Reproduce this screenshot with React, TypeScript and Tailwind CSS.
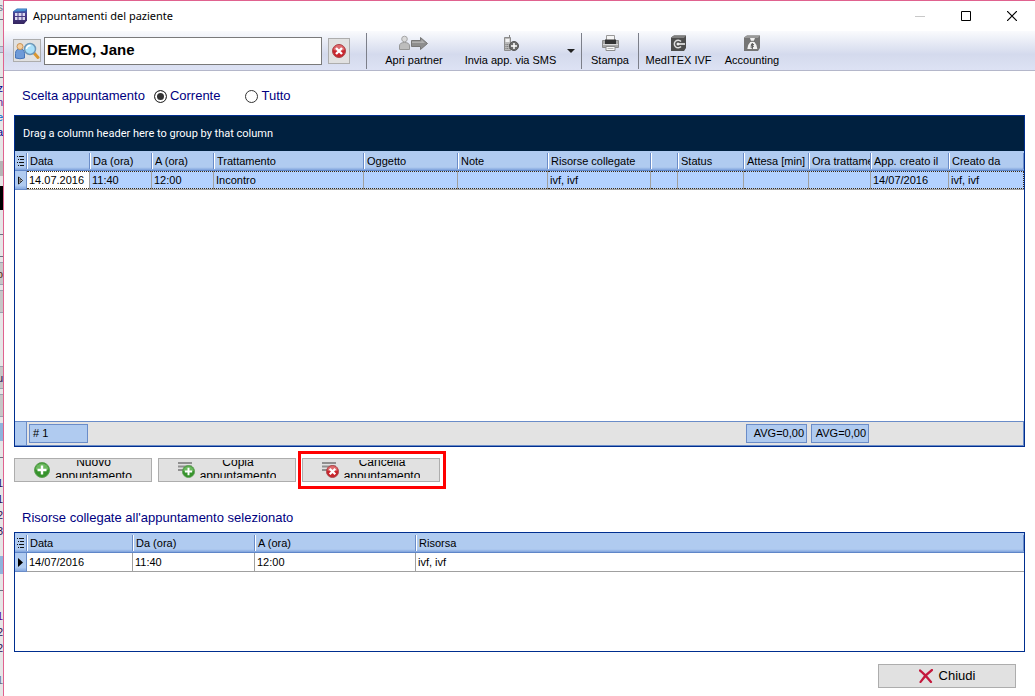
import type { ReactNode } from 'react';
import { clsx } from 'clsx';

type Column = {
  title: string;
  width: string;
  value: string;
  summary?: string;
};

const appointmentColumns: Column[] = [
  { title: 'Data', width: 'w-[63px]', value: '14.07.2016', summary: '# 1' },
  { title: 'Da (ora)', width: 'w-[62px]', value: '11:40' },
  { title: 'A (ora)', width: 'w-[62px]', value: '12:00' },
  { title: 'Trattamento', width: 'w-[150px]', value: 'Incontro' },
  { title: 'Oggetto', width: 'w-[94px]', value: '' },
  { title: 'Note', width: 'w-[90px]', value: '' },
  { title: 'Risorse collegate', width: 'w-[103px]', value: 'ivf, ivf' },
  { title: '', width: 'w-[27px]', value: '' },
  { title: 'Status', width: 'w-[66px]', value: '' },
  { title: 'Attesa [min]', width: 'w-[65px]', value: '', summary: 'AVG=0,00' },
  { title: 'Ora trattamento', width: 'w-[62px]', value: '', summary: 'AVG=0,00' },
  { title: 'App. creato il', width: 'w-[78px]', value: '14/07/2016' },
  { title: 'Creato da', width: '', value: 'ivf, ivf' },
];

const resourceColumns: Column[] = [
  { title: 'Data', width: 'w-[106px]', value: '14/07/2016' },
  { title: 'Da (ora)', width: 'w-[122px]', value: '11:40' },
  { title: 'A (ora)', width: 'w-[161px]', value: '12:00' },
  { title: 'Risorsa', width: '', value: 'ivf, ivf' },
];

// sliver of the window that lies behind the dialog
const backdrop: { size: string; text?: string }[] = [
  { size: 'h-[19px] text-gray-500', text: 's' },
  { size: 'h-[27px] border-t border-gray-500' },
  { size: 'h-[6px] bg-[#c9cde0] border-t border-gray-400' },
  { size: 'h-[25px] border-t border-gray-400' },
  { size: 'h-[4px] border-t border-gray-500' },
  { size: 'h-[14px] text-[#00008b]', text: 'z' },
  { size: 'h-[15px] text-[#5b0a91]', text: 'n' },
  { size: 'h-[15px] text-[#0066cc]', text: 'e' },
  { size: 'h-[36px] text-[#00008b]', text: 'a' },
  { size: 'h-[15px] bg-[#b5b5b5]' },
  { size: 'h-[10px]' },
  { size: 'h-[24px] bg-black' },
  { size: 'h-[24px]' },
  { size: 'h-[22px] border-t border-gray-500' },
  { size: 'h-[6px] border-t border-gray-500' },
  { size: 'h-[23px] bg-[#c6c6c6] border-y border-gray-400 leading-[22px] text-[#5b2a10]', text: 'o' },
  { size: 'h-[5px]' },
  { size: 'h-[23px] bg-[#c6c6c6] border-y border-gray-400' },
  { size: 'h-[53px]' },
  { size: 'h-[23px] bg-[#c6c6c6] border-y border-gray-400 leading-[22px] text-[#2b1055]', text: 'u' },
  { size: 'h-[5px]' },
  { size: 'h-[23px] bg-[#c6c6c6] border-y border-gray-400' },
  { size: 'h-[6px]' },
  { size: 'h-[18px] bg-[#8fb4dc]' },
  { size: 'h-[16px]' },
  { size: 'h-[19px] border-t border-gray-500' },
  { size: 'h-[16px] text-[#2b1055]', text: '1' },
  { size: 'h-[16px] text-[#2b1055]', text: '1' },
  { size: 'h-[16px] text-[#2b1055]', text: '2' },
  { size: 'h-[32px] text-[#2b1055]', text: '3' },
  { size: 'h-[18px] bg-[#8fb4dc]' },
  { size: 'h-[16px]' },
  { size: 'h-[19px] border-t border-gray-500' },
  { size: 'h-[16px] text-[#5b0a91]', text: '1' },
  { size: 'h-[16px] text-[#2b1055]', text: '2' },
  { size: 'h-[32px] text-[#2b1055]', text: '2' },
  { size: 'h-[16px] text-gray-500', text: '1' },
];

function AppIcon() {
  return (
    <svg width="14" height="16" viewBox="0 0 14 16">
      <defs>
        <linearGradient id="app" x1="0" y1="0" x2="0" y2="1">
          <stop offset="0" stopColor="#2f6fb8" />
          <stop offset="0.35" stopColor="#4b3f90" />
          <stop offset="1" stopColor="#35265f" />
        </linearGradient>
      </defs>
      <path d="M0 3.500 4 .5h10v12L11 16H0z" fill="url(#app)" />
      <path d="M.5 3.500 4 1h9.500L12 3z" fill="#4a90d0" />
      <path d="M2 5h2.500v3H2zM5.500 5h3v3h-3zM9.500 5H12v3H9.500zM2 9h2.500v3H2zM5.500 9h3v3h-3zM9.500 9H12v3H9.500z" fill="#dcd8ee" />
    </svg>
  );
}

function PatientSearchIcon() {
  return (
    <svg width="25" height="18" viewBox="0 0 25 18">
      <path d="M.5 16v-4.500q0-4.500 4.500-4.500t4.500 4.500V16q-4.500 1.500-9 0z" fill="#6f9bd8" stroke="#4674b8" />
      <circle cx="5" cy="4.500" r="3" fill="#f5cfa0" stroke="#c99355" />
      <path d="m19 11 4 4.500" stroke="#d9962f" strokeWidth="3" strokeLinecap="round" />
      <circle cx="15" cy="7" r="5.500" fill="#a9e0fa" stroke="#6f98b8" strokeWidth="1.500" />
      <path d="M11.500 7q.5-3.500 4-3.500" stroke="#fff" strokeWidth="1.500" fill="none" />
    </svg>
  );
}

function DeleteBadge({ size = 14 }: { size?: number }) {
  return (
    <svg width={size} height={size} viewBox="0 0 14 14">
      <circle cx="7" cy="7" r="6.500" fill="#c9252c" stroke="#a9474b" />
      <path d="M1.500 6a5.500 5 0 0 1 11 0q-5.500 2-11 0" fill="#dd6a6d" />
      <path d="m4 4 6 6m0-6-6 6" stroke="#fff" strokeWidth="2.400" />
    </svg>
  );
}

function AddBadge({ size = 16 }: { size?: number }) {
  return (
    <svg width={size} height={size} viewBox="0 0 16 16">
      <circle cx="8" cy="8" r="7.500" fill="#36932c" stroke="#5f9f55" />
      <path d="M1.500 7.500a6.500 6 0 0 1 13 0q-6.500 2-13 0" fill="#6cb85f" />
      <path d="M8 3.500v9M3.500 8h9" stroke="#fff" strokeWidth="2.400" />
    </svg>
  );
}

function ListIcon({ children }: { children: ReactNode }) {
  return (
    <span className="relative block h-4 w-[17px]">
      <svg width="15" height="9" viewBox="0 0 15 9">
        <path d="M0 1h14M0 4.500h14M0 8h6" stroke="#8f8f8f" strokeWidth="2" />
      </svg>
      <span className="absolute right-0 bottom-0 [&>svg]:block">{children}</span>
    </span>
  );
}

function PartnerIcon() {
  return (
    <svg width="32" height="16" viewBox="0 0 32 16">
      <path d="M1.500 14.500V11q0-3.500 5-3.500t5 3.500v3.500z" fill="#bdbdbd" stroke="#979797" />
      <circle cx="6.500" cy="4" r="2.800" fill="#dadada" stroke="#a5a5a5" />
      <path d="M13.500 5.500h9V2.500l7 6-7 6v-3h-9z" fill="#8e8e8e" stroke="#777" />
      <path d="M14 6.500h9.500v-2l3.500 3.500H14z" fill="#b0b0b0" />
    </svg>
  );
}

function SmsIcon() {
  return (
    <svg width="16" height="16" viewBox="0 0 16 16">
      <path d="M1.500 2.500h6v13h-6z" fill="#b9b9b9" stroke="#8c8c8c" />
      <path d="M6.500 0v3" stroke="#868686" />
      <path d="M2.500 4h4v3h-4z" fill="#f1f1f1" />
      <path d="M2.500 9.500h4.500M2.500 11.500h4.500M2.500 13.500h4.500" stroke="#777" strokeDasharray="1 .7" />
      <circle cx="11" cy="11" r="4.500" fill="#6c6c6c" stroke="#555" />
      <path d="M11 8v6M8 11h6" stroke="#fff" strokeWidth="1.500" />
    </svg>
  );
}

function PrinterIcon() {
  return (
    <svg width="17" height="16" viewBox="0 0 17 16">
      <path d="M4.500.5h8v5h-8z" fill="#f5f5f5" stroke="#999" />
      <path d="M.5 5.500h16v7H.5z" fill="#a8a8a8" stroke="#8a8a8a" />
      <path d="M3 4.500h11V9H3z" fill="#333" />
      <path d="M1 9.500h15" stroke="#d9d9d9" />
      <path d="M4 11.500h9v4H4z" fill="#fafafa" stroke="#8c8c8c" />
      <path d="M5.500 13.500h6" stroke="#b5b5b5" />
    </svg>
  );
}

function MeditexIcon() {
  return (
    <svg width="16" height="16" viewBox="0 0 16 16">
      <path d="m0 2.500 3-2h12v12.500L13 16H0z" fill="#4d4d4d" />
      <path d="m0 2.500 3-2h12L13 3H0z" fill="#808080" />
      <path d="M10 6.500a3.800 3.800 0 1 0 0 5" fill="none" stroke="#ddd" strokeWidth="1.500" />
      <path d="M6.500 9H14" stroke="#eee" strokeWidth="1.600" />
      <circle cx="7" cy="9" r="1.500" fill="#eee" />
    </svg>
  );
}

function AccountingIcon() {
  return (
    <svg width="16" height="16" viewBox="0 0 16 16">
      <path d="m0 2.500 3-2h13v12.500L14 16H0z" fill="#757575" />
      <path d="m0 2.500 3-2h13L14 3H0z" fill="#9a9a9a" />
      <path d="M6 3h5L9.800 6q3.500 4 3.500 8h-10q0-4 3.700-8z" fill="#f3f3f3" />
      <path d="M6 6.300h5" stroke="#666" />
      <path d="M10 9.500q-3-1-3 .5t2.500 1q0 2-3 1M8.300 8v6" fill="none" stroke="#555" />
    </svg>
  );
}

function CloseCross() {
  return (
    <svg width="14" height="14" viewBox="0 0 14 14">
      <path d="M1 1.500q4 3 11 11.500M13 1Q6 6 1.500 13" fill="none" stroke="#c4183c" strokeWidth="2.200" strokeLinecap="round" />
    </svg>
  );
}

function MenuGlyph() {
  return (
    <svg className="mx-auto block" width="7" height="10" viewBox="0 0 7 10">
      <path d="M0 .5h1M2 .5h5M1 3.500h1M3 3.500h4M0 6.500h1M2 6.500h5M1 9.500h1M3 9.500h4" stroke="#111" />
    </svg>
  );
}

function ToolButton({ icon, label, width }: { icon: ReactNode; label: string; width: string }) {
  return (
    <button type="button" className={clsx('flex flex-col items-center gap-px whitespace-nowrap pt-px text-[11px] leading-4', width)}>
      {icon}
      {label}
    </button>
  );
}

function Separator() {
  return <div className="h-9 w-px shrink-0 bg-[#7c7f8a]" />;
}

function ActionButton({ icon, children }: { icon: ReactNode; children: ReactNode }) {
  return (
    <button
      type="button"
      className="flex h-6 w-[138px] items-center justify-center gap-[5px] border border-[#adadad] bg-[#e1e1e1] text-xs"
    >
      {icon}
      <span className="mb-[2px] flex h-[18px] items-center overflow-hidden leading-[14px]">
        <span>{children}</span>
      </span>
    </button>
  );
}

function RadioOption({ label, checked }: { label: string; checked?: boolean }) {
  return (
    <label className="flex items-center gap-[3px]">
      <input
        type="radio"
        name="scelta"
        defaultChecked={checked}
        className="size-[13px] appearance-none rounded-full border border-[#333] bg-white checked:bg-[#333] checked:shadow-[inset_0_0_0_2px_white]"
      />
      {label}
    </label>
  );
}

function DataGrid({ columns, label, selected }: { columns: Column[]; label: string; selected?: boolean }) {
  return (
    <table aria-label={label} className="w-full table-fixed border-separate border-spacing-0 text-[11px] leading-4">
      <thead>
        <tr>
          <th className="h-5 w-3 border-b border-[#5f86c8] bg-linear-to-b from-[#b0cbf0] from-85% to-[#7ea2dc] p-0">
            <div className="flex h-4 items-center border-r border-[#6a8cc8]">
              <MenuGlyph />
            </div>
          </th>
          {columns.map((col, i) => (
            <th
              key={i}
              className={clsx('h-5 border-b border-[#5f86c8] bg-linear-to-b from-[#b0cbf0] from-85% to-[#7ea2dc] p-0 text-left font-normal', col.width)}
            >
              <div className="h-4 overflow-hidden border-r border-l border-r-[#6a8cc8] border-l-white pl-[2px] whitespace-nowrap">
                {col.title}
              </div>
            </th>
          ))}
        </tr>
      </thead>
      <tbody>
        <tr>
          <td className="h-[19px] border-r border-b border-[#6a8cc8] bg-linear-to-b from-[#b0cbf0] from-80% to-[#86a9e0] p-0">
            <svg className="mx-auto block" width="6" height="9" viewBox="0 0 6 9">
              {selected ? (
                <path d="M.5 1v7l4-3.500zM2 3v3" fill="#fff" stroke="#111" />
              ) : (
                <path d="M0 0v9l5-4.500z" fill="#000" />
              )}
            </svg>
          </td>
          {columns.map((col, i) => (
            <td
              key={i}
              className={clsx(
                'h-[19px] border-b border-[#a0a0a0] p-0',
                i < columns.length - 1 && 'border-r',
                selected && i > 0 && 'bg-[#b3d1ff]',
              )}
            >
              <div
                className={clsx(
                  'h-[18px] truncate pl-[2px]',
                  selected ? 'border-y border-dotted border-[#3d2a10] leading-4' : 'leading-[18px]',
                  selected && i === columns.length - 1 && 'border-r',
                )}
              >
                {col.value}
              </div>
            </td>
          ))}
        </tr>
      </tbody>
    </table>
  );
}

export default function App() {
  return (
    <div className="flex min-h-screen bg-white font-['Liberation_Sans',Arial,sans-serif] text-black">
      <div aria-hidden="true" className="w-[3px] shrink-0 overflow-hidden bg-[#e6e6e6] text-[11px] leading-[14px]">
        {backdrop.map((part, i) => (
          <div key={i} className={clsx('flex justify-end overflow-hidden', part.size)}>
            {part.text}
          </div>
        ))}
      </div>

      <div className="flex min-w-0 flex-1 flex-col border-t border-l border-[#e0628f]">
        {/* Title bar */}
        <header className="flex h-[30px] items-center pr-[18px] pl-[9px]">
          <AppIcon />
          <h1 className="ml-[6px] flex-1 font-['Noto_Sans',sans-serif] text-[11px]">Appuntamenti del paziente</h1>
          <div className="flex gap-9">
            <button type="button" aria-label="Riduci a icona">
              <svg width="10" height="10" viewBox="0 0 10 10">
                <path d="M0 5.500h10" stroke="#c8c8c8" />
              </svg>
            </button>
            <button type="button" aria-label="Ingrandisci">
              <svg width="10" height="10" viewBox="0 0 10 10">
                <path d="M.5.5h9v9h-9z" fill="none" stroke="#000" />
              </svg>
            </button>
            <button type="button" aria-label="Chiudi finestra">
              <svg width="10" height="10" viewBox="0 0 10 10">
                <path d="m0 0 10 10M10 0 0 10" stroke="#000" strokeWidth="1.200" />
              </svg>
            </button>
          </div>
        </header>

        {/* Toolbar */}
        <div className="flex h-10 items-center border-b border-[#b4b7ca] bg-linear-to-b from-[#fafbfd] via-[#d4daed] via-60% to-[#dde2f4] pl-[9px]">
          <button
            type="button"
            aria-label="Cerca paziente"
            className="mr-[3px] flex h-[23px] w-7 items-center justify-center border border-[#adadad] bg-[#e1e1e1]"
          >
            <PatientSearchIcon />
          </button>
          <input
            type="text"
            aria-label="Paziente"
            defaultValue="DEMO, Jane"
            className="h-7 w-[278px] border border-[#7a7a7a] bg-white pb-[2px] pl-[2px] text-[15px] font-bold"
          />
          <button
            type="button"
            aria-label="Cancella paziente"
            className="mr-4 ml-[6px] flex h-[26px] w-[22px] items-center justify-center border border-[#adadad] bg-[#e1e1e1]"
          >
            <DeleteBadge />
          </button>
          <Separator />
          <ToolButton icon={<PartnerIcon />} label="Apri partner" width="w-[94px]" />
          <ToolButton icon={<SmsIcon />} label="Invia app. via SMS" width="w-[99px]" />
          <button type="button" aria-label="Altre opzioni SMS" className="flex h-9 w-[21px] items-center justify-center">
            <svg width="8" height="4" viewBox="0 0 8 4">
              <path d="M0 0h8L4 4z" fill="#222" />
            </svg>
          </button>
          <Separator />
          <ToolButton icon={<PrinterIcon />} label="Stampa" width="w-14" />
          <Separator />
          <ToolButton icon={<MeditexIcon />} label="MedITEX IVF" width="w-[79px]" />
          <ToolButton icon={<AccountingIcon />} label="Accounting" width="w-[68px]" />
        </div>

        <main className="flex flex-1 flex-col px-[10px] pb-2">
          <div
            role="radiogroup"
            aria-labelledby="scelta"
            className="flex h-11 items-center pt-[6px] pl-2 text-[13px] text-[#00007f]"
          >
            <span id="scelta" className="mr-[9px]">Scelta appuntamento</span>
            <div className="flex gap-[25px]">
              <RadioOption label="Corrente" checked />
              <RadioOption label="Tutto" />
            </div>
          </div>

          {/* Appointments */}
          <section className="flex flex-1 flex-col border border-[#002e8f]">
            <div className="flex h-[35px] items-center bg-[#00203f] px-2 pt-px font-[Roboto,sans-serif] text-[11px] text-white">
              Drag a column header here to group by that column
            </div>
            <DataGrid columns={appointmentColumns} label="Appuntamenti" selected />
            <div className="min-h-20 flex-1" />
            <div className="flex h-[25px] border-y border-r border-[#6a8cc8] bg-[#e3e3e3] text-[11px]">
              <div className="w-3 shrink-0 border-r border-[#6a8cc8] bg-[#b0cbf0]" />
              {appointmentColumns.map((col, i) => (
                <div key={i} className={clsx('px-[2px] py-[2px]', col.width ? 'shrink-0' : 'flex-1', col.width)}>
                  {col.summary && (
                    <div
                      className={clsx(
                        'h-[19px] border border-[#6a8cc8] bg-[#b0cbf0] leading-[17px]',
                        i === 0 ? 'pl-[3px]' : 'pr-[2px] text-right',
                      )}
                    >
                      {col.summary}
                    </div>
                  )}
                </div>
              ))}
            </div>
          </section>

          <div className="mt-[11px] flex gap-[6px]">
            <ActionButton icon={<AddBadge />}>
              Nuovo
              <br />
              appuntamento
            </ActionButton>
            <ActionButton icon={<ListIcon><AddBadge size={13} /></ListIcon>}>
              Copia
              <br />
              appuntamento
            </ActionButton>
            <div className="relative">
              <ActionButton icon={<ListIcon><DeleteBadge size={13} /></ListIcon>}>
                Cancella
                <br />
                appuntamento
              </ActionButton>
              <div className="pointer-events-none absolute -inset-y-[7px] -right-[6px] -left-1 border-3 border-[#ff0000]" />
            </div>
          </div>

          {/* Linked resources */}
          <h2 className="mt-7 mb-[6px] pl-2 text-[13px] leading-4 text-[#00007f]">
            Risorse collegate all'appuntamento selezionato
          </h2>
          <section className="h-[120px] shrink-0 border border-[#002e8f]">
            <DataGrid columns={resourceColumns} label="Risorse collegate" />
          </section>

          <div className="mt-3 flex justify-end pr-[9px]">
            <button
              type="button"
              className="flex h-6 w-[138px] items-center justify-center gap-[6px] border border-[#adadad] bg-[#e1e1e1] text-[13px]"
            >
              <CloseCross />
              Chiudi
            </button>
          </div>
        </main>
      </div>
    </div>
  );
}
